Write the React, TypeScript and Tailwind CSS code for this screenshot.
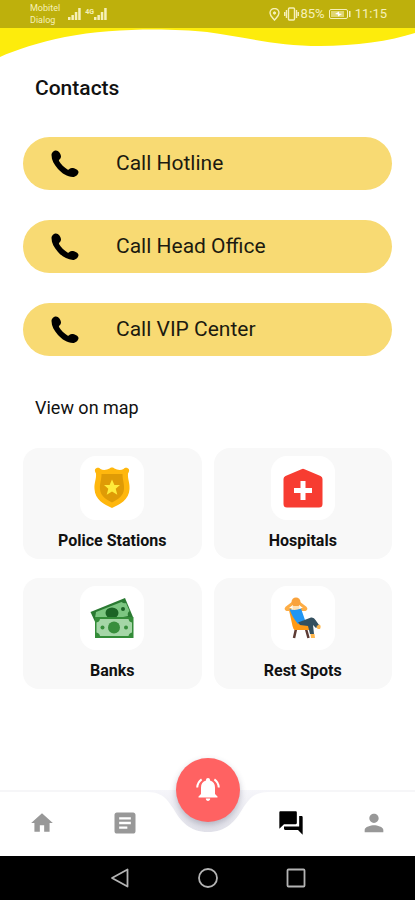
import type { ReactNode } from "react";
import { MdArticle, MdForum, MdHome, MdPerson } from "react-icons/md";

function PhoneIcon() {
  return (
    <svg width="28" height="28" viewBox="0 0 28 28" aria-hidden="true">
      <path
        d="M0.500 5C0.500 2.500 3 0.500 5 0.500C7.500 0.500 10 4 10 6.500C10 9 7.500 9.500 8 11C9.500 14 13.500 17.500 16.500 19.500C18 20.500 18.500 18 21 18C23.500 18 27.500 20 27.500 22C27.500 24.500 24.500 27 22 27C16 26.500 11 23.500 7 19C3 14.500 0.500 10 0.500 5Z"
        fill="#000"
      />
    </svg>
  );
}

function BellIcon() {
  return (
    <svg width="26" height="26" viewBox="0 0 26 26" aria-hidden="true">
      <path
        d="M13 1C14.200 1 15 1.800 15 3V3.600C18.300 4.400 20 7.200 20 10.500V17L22.500 19.500V20.500H3.500V19.500L6 17V10.500C6 7.200 7.700 4.400 11 3.600V3C11 1.800 11.800 1 13 1ZM10.800 21.500H15.200C15.200 23 14.200 24 13 24C11.800 24 10.800 23 10.800 21.500Z"
        fill="#fff"
      />
      <path d="M2.200 10.500C2.500 7 4 4.200 6.600 2.400M23.800 10.500C23.500 7 22 4.200 19.400 2.400" fill="none" stroke="#fff" strokeWidth="2" />
    </svg>
  );
}

function BadgeIcon() {
  return (
    <svg width="36" height="42" viewBox="0 0 36 42" aria-hidden="true">
      <path
        d="M1 2.500C2 0.500 5 0 6.500 2C9 3.500 13 3 15.500 1.500C16.500 0 19.500 0 20.500 1.500C23 3 27 3.500 29.500 2C31 0 34 0.500 35 2.500C35.500 4 34.500 5.500 34 6.500C33.500 12 36 16 35.500 22C35 33 26 37 18 41C10 37 1 33 0.500 22C0 16 2.500 12 2 6.500C1.500 5.500 0.500 4 1 2.500Z"
        fill="#FFB70D"
      />
      <path
        d="M7.500 7H28.500C28.500 13 30.500 17 30 22C29.500 29 24 32.500 18 35.500C12 32.500 6.500 29 6 22C5.500 17 7.500 13 7.500 7Z"
        fill="#DF9B06"
      />
      <path
        d="M18 12.500L20.400 18H26L21.700 21.800L23.300 27.800L18 24.500L12.700 27.800L14.300 21.800L10 18H15.600Z"
        fill="#FFEB3B"
      />
    </svg>
  );
}

function HospitalIcon() {
  return (
    <svg width="40" height="40" viewBox="0 0 40 40" aria-hidden="true">
      <path
        d="M18.500 1.200Q20 0.400 21.500 1.200L37.500 8Q39.500 9 39.500 11V36Q39.500 39.500 36 39.500H4Q0.500 39.500 0.500 36V11Q0.500 9 2.500 8Z"
        fill="#F73C31"
      />
      <path d="M17.500 13H22.500V20H29V25H22.500V32H17.500V25H11V20H17.500Z" fill="#fff" />
    </svg>
  );
}

function BanknotesIcon() {
  return (
    <svg width="44" height="42" viewBox="0 0 44 42" aria-hidden="true">
      <path d="M0.500 15L35 1L43 20L6 27Z" fill="#2A7A32" />
      <path d="M6 15L31.500 5Q34 7 36 6L39.500 14Q37 16 38 19L9 25Q8 21 5 21Z" fill="#7CC681" />
      <ellipse cx="22" cy="16" rx="6.500" ry="5.500" fill="#1B6425" />
      <circle cx="33" cy="12" r="2" fill="#1B6425" />
      <path d="M5 20H43.500V41H5Z" fill="#338C38" />
      <path
        d="M10 22H38.500Q39 25 42 25.500V35.500Q39 36 38.500 39H10Q9.500 36 6.500 35.500V25.500Q9.500 25 10 22Z"
        fill="#A5D6A7"
      />
      <circle cx="24" cy="30.500" r="6" fill="#388E3C" />
      <circle cx="12.500" cy="30.500" r="2" fill="#388E3C" />
      <circle cx="36" cy="30.500" r="2" fill="#388E3C" />
    </svg>
  );
}

function LoungerIcon() {
  return (
    <svg width="38" height="42" viewBox="0 0 38 42" aria-hidden="true">
      <path d="M12 32L10 41M22 32L24.500 41" stroke="#5D3B34" strokeWidth="2.500" />
      <path d="M5 13L9 14L15 27L25 28Q27 30 25 33H11Q9 32 8.500 29Z" fill="#FF9914" />
      <path
        d="M11 4.500L2.500 11Q1.500 12 3 12.500L7.500 12.500M13 4.500L21.500 11Q22.500 12 21 12.500L17 12.500"
        fill="none"
        stroke="#FDAD45"
        strokeWidth="3"
        strokeLinejoin="round"
      />
      <circle cx="12" cy="5" r="4.500" fill="#F9A23C" />
      <path d="M8.500 9H15.500V13H8.500Z" fill="#FFE0B2" />
      <path d="M5.500 12Q11 14 17 11.500L21 23L14 27Q8 20 5.500 12Z" fill="#2196F3" />
      <path
        d="M14 25.500L27 20.500Q30 20 31.500 23L35 28L32 31L29 28L30 37H26L24 29L16 28Z"
        fill="#34505F"
      />
      <path d="M32.500 29L35.500 27.500Q37.500 29 36 32H33.500Z" fill="#FFB74D" />
      <path d="M26.500 37H30.500L31 41H27Z" fill="#FFB74D" />
    </svg>
  );
}

function SignalIcon() {
  return (
    <svg width="13" height="12" viewBox="0 0 13 12" fill="currentColor" aria-hidden="true">
      <path d="M0 9H2.500V12H0ZM3.400 7H5.900V12H3.400ZM6.800 4H9.300V12H6.800ZM10.200 0H12.700V12H10.200Z" />
    </svg>
  );
}

function StatusBar() {
  return (
    <div className="flex h-7 items-center justify-between bg-[#beb00c] pl-[30px] pr-7 text-[#f6f0b8]">
      <div className="flex items-center gap-2">
        <div className="text-[9px] leading-3">
          <div>Mobitel</div>
          <div>Dialog</div>
        </div>
        <div className="flex items-center gap-1">
          <SignalIcon />
          <div className="flex items-end">
            <span className="self-start text-[7px] leading-2 font-bold">4G</span>
            <SignalIcon />
          </div>
        </div>
      </div>
      <div className="flex items-center text-[13px] leading-4">
        <svg width="11" height="13" viewBox="0 0 11 13" fill="none" stroke="currentColor" aria-hidden="true">
          <path d="M5.500 12C3 9 1 7.500 1 5A4.500 4.500 0 0 1 10 5C10 7.500 8 9 5.500 12Z" strokeWidth="1.400" />
          <circle cx="5.500" cy="5" r="1.200" fill="currentColor" />
        </svg>
        <svg className="ml-1" width="15" height="14" viewBox="0 0 15 14" fill="none" stroke="currentColor" strokeWidth="1.400" aria-hidden="true">
          <rect x="4.500" y="1" width="6" height="12" rx="1" />
          <path d="M2.500 3V11M12.500 3V11M0.700 5V9M14.300 5V9" />
        </svg>
        <span className="ml-px">85%</span>
        <svg className="mx-1" width="22" height="10" viewBox="0 0 22 10" aria-hidden="true">
          <rect x="0.500" y="0.500" width="18" height="9" rx="1.500" fill="none" stroke="currentColor" />
          <rect x="2" y="2" width="13" height="6" fill="currentColor" opacity="0.600" />
          <path d="M6 5L10 2.500V4.500L13 5L9 7.500V5.500Z" fill="#fff" />
          <path d="M20 2H21.500V8H20Z" fill="currentColor" />
        </svg>
        <span>11:15</span>
      </div>
    </div>
  );
}

const calls = ["Call Hotline", "Call Head Office", "Call VIP Center"];

const places: { name: string; icon: ReactNode }[] = [
  { name: "Police Stations", icon: <BadgeIcon /> },
  { name: "Hospitals", icon: <HospitalIcon /> },
  { name: "Banks", icon: <BanknotesIcon /> },
  { name: "Rest Spots", icon: <LoungerIcon /> },
];

function BottomNav() {
  const item = "flex h-full items-center justify-center text-[#989898]";
  return (
    <nav className="relative h-[66px]">
      <div className="absolute inset-0 flex" aria-hidden="true">
        <div className="flex-1 border-t-2 border-[#f6f6f8]" />
        <svg width="124" height="66" viewBox="0 0 124 66">
          <defs>
            <linearGradient id="notch" x1="0" y1="0" x2="0" y2="1">
              <stop offset="0" stopColor="#f6f6fa" />
              <stop offset="1" stopColor="#e2e2ea" />
            </linearGradient>
          </defs>
          <path d="M0 0H124V2C108 2 104 8 97 18C89 32 80 42 62 42C44 42 35 32 27 18C20 8 16 2 0 2Z" fill="url(#notch)" />
        </svg>
        <div className="flex-1 border-t-2 border-[#f6f6f8]" />
      </div>
      <div className="relative grid h-full grid-cols-5">
        <button type="button" aria-label="Home" className={item}>
          <MdHome size={26} />
        </button>
        <button type="button" aria-label="News" className={item}>
          <MdArticle size={28} />
        </button>
        <div className="flex justify-center">
          <button
            type="button"
            aria-label="Alert"
            className="-mt-8 flex size-16 items-center justify-center rounded-full bg-[#ff6262] shadow-[0_3px_6px_rgba(60,60,90,0.3)]"
          >
            <BellIcon />
          </button>
        </div>
        <button type="button" aria-label="Contacts" aria-current="page" className="flex h-full items-center justify-center text-black">
          <MdForum size={28} />
        </button>
        <button type="button" aria-label="Profile" className={item}>
          <MdPerson size={28} />
        </button>
      </div>
    </nav>
  );
}

function SystemNav() {
  const button = "flex size-8 items-center justify-center";
  return (
    <div className="flex h-11 items-center justify-center gap-14 bg-black text-[#b4b4b4]">
      <button type="button" aria-label="Back" className={button}>
        <svg width="20" height="20" viewBox="0 0 20 20" fill="none" stroke="currentColor" strokeWidth="1.800" strokeLinejoin="round">
          <path d="M17.500 1.500V18.500L2 10Z" />
        </svg>
      </button>
      <button type="button" aria-label="Home screen" className={button}>
        <svg width="20" height="20" viewBox="0 0 20 20" fill="none" stroke="currentColor" strokeWidth="1.800">
          <circle cx="10" cy="10" r="9" />
        </svg>
      </button>
      <button type="button" aria-label="Recent apps" className={button}>
        <svg width="20" height="20" viewBox="0 0 20 20" fill="none" stroke="currentColor" strokeWidth="1.800">
          <rect x="1.500" y="1.500" width="17" height="17" rx="1" />
        </svg>
      </button>
    </div>
  );
}

export default function App() {
  return (
    <div className="flex min-h-screen flex-col bg-white font-[Roboto,sans-serif] text-[#111]">
      <StatusBar />
      <svg className="h-8 w-full" viewBox="0 0 415 32" preserveAspectRatio="none" aria-hidden="true">
        <path
          d="M0 0H415V5C390 13 355 18 320 18C275 18 240 8 207 4C170 0 110 0 65 9C40 14 15 22 0 29Z"
          fill="#fdec0c"
        />
      </svg>
      <main className="flex-1 px-[23px] pt-4">
        <h1 className="px-3 text-[21px] leading-6 font-medium">Contacts</h1>
        <div className="mt-[37px] flex flex-col gap-[30px]">
          {calls.map((label) => (
            <button
              key={label}
              type="button"
              className="flex h-[53px] items-center gap-[37px] rounded-full bg-[#f8da73] pl-7 text-left text-[21px] text-[#1c1a10]"
            >
              <PhoneIcon />
              <span>{label}</span>
            </button>
          ))}
        </div>
        <h2 className="mt-10 px-3 text-lg leading-6">View on map</h2>
        <div className="mt-7 grid grid-cols-2 gap-x-3 gap-y-[19px]">
          {places.map(({ name, icon }) => (
            <button
              key={name}
              type="button"
              className="flex h-[111px] flex-col items-center rounded-2xl bg-[#f8f8f8] pt-2"
            >
              <span className="flex size-16 items-center justify-center rounded-2xl bg-white">{icon}</span>
              <span className="mt-[11px] text-base leading-5 font-bold">{name}</span>
            </button>
          ))}
        </div>
      </main>
      <BottomNav />
      <SystemNav />
    </div>
  );
}
